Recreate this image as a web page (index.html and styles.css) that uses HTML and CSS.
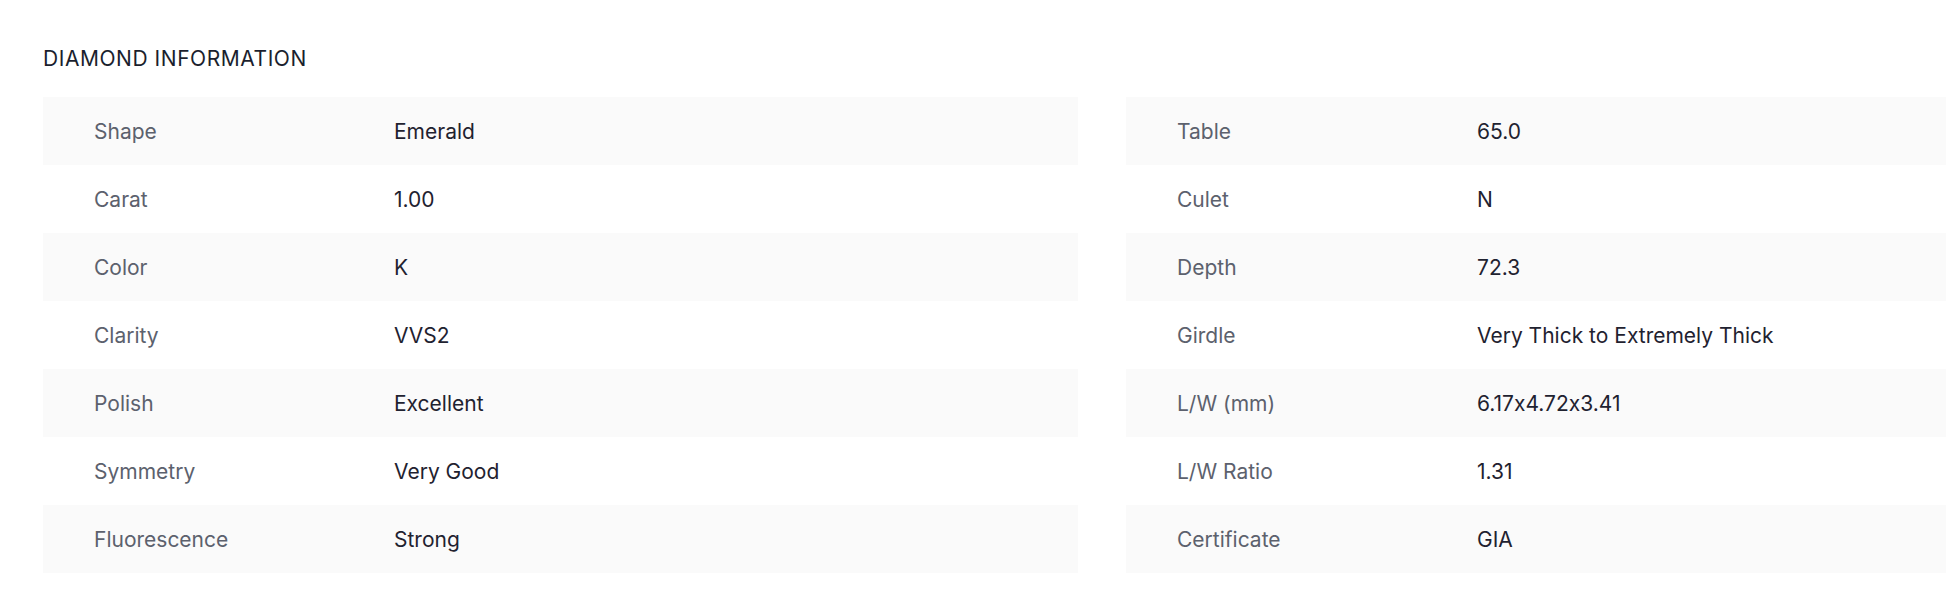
FILE: index.html
```html
<!DOCTYPE html>
<html lang="en">
<head>
<meta charset="utf-8">
<title>Diamond Information</title>
<link rel="stylesheet" href="styles.css">
</head>
<body>
<section class="info">
  <h2 class="info-title">DIAMOND INFORMATION</h2>
  <div class="info-grid">
    <div class="spec-table">
      <div class="spec-row"><span class="spec-label">Shape</span><span class="spec-value">Emerald</span></div>
      <div class="spec-row"><span class="spec-label">Carat</span><span class="spec-value">1.00</span></div>
      <div class="spec-row"><span class="spec-label">Color</span><span class="spec-value">K</span></div>
      <div class="spec-row"><span class="spec-label">Clarity</span><span class="spec-value">VVS2</span></div>
      <div class="spec-row"><span class="spec-label">Polish</span><span class="spec-value">Excellent</span></div>
      <div class="spec-row"><span class="spec-label">Symmetry</span><span class="spec-value">Very Good</span></div>
      <div class="spec-row"><span class="spec-label">Fluorescence</span><span class="spec-value">Strong</span></div>
    </div>
    <div class="spec-table">
      <div class="spec-row"><span class="spec-label">Table</span><span class="spec-value">65.0</span></div>
      <div class="spec-row"><span class="spec-label">Culet</span><span class="spec-value">N</span></div>
      <div class="spec-row"><span class="spec-label">Depth</span><span class="spec-value">72.3</span></div>
      <div class="spec-row"><span class="spec-label">Girdle</span><span class="spec-value">Very Thick to Extremely Thick</span></div>
      <div class="spec-row"><span class="spec-label">L/W (mm)</span><span class="spec-value">6.17x4.72x3.41</span></div>
      <div class="spec-row"><span class="spec-label">L/W Ratio</span><span class="spec-value">1.31</span></div>
      <div class="spec-row"><span class="spec-label">Certificate</span><span class="spec-value">GIA</span></div>
    </div>
  </div>
</section>
</body>
</html>
```
FILE: styles.css
```css
html, body {
  margin: 0;
  padding: 0;
  background: #ffffff;
  overflow: hidden;
}

body {
  font-family: Inter, "Noto Sans", sans-serif;
  font-size: 21px;
  line-height: 24px;
  color: #1f2230;
  font-feature-settings: "calt" 0;
}

.info {
  padding: 47px 0 0 43px;
}

.info-title {
  margin: 0 0 26px;
  font-size: 21px;
  line-height: 24px;
  font-weight: 400;
  letter-spacing: 0.55px;
  color: #1b1f2e;
}

.info-grid {
  display: grid;
  grid-template-columns: 1035px minmax(0, 1fr);
  column-gap: 48px;
}

.spec-table {
  display: flex;
  flex-direction: column;
  min-width: 0;
}

.spec-row {
  display: grid;
  grid-template-columns: 300px minmax(0, 1fr);
  align-items: center;
  height: 68px;
  padding-left: 51px;
  padding-top: 1px;
  box-sizing: border-box;
}

.spec-row:nth-child(odd) {
  background: #fafafa;
}

.spec-label {
  color: #5c616d;
}

.spec-value {
  color: #1f2230;
  white-space: nowrap;
}
```
